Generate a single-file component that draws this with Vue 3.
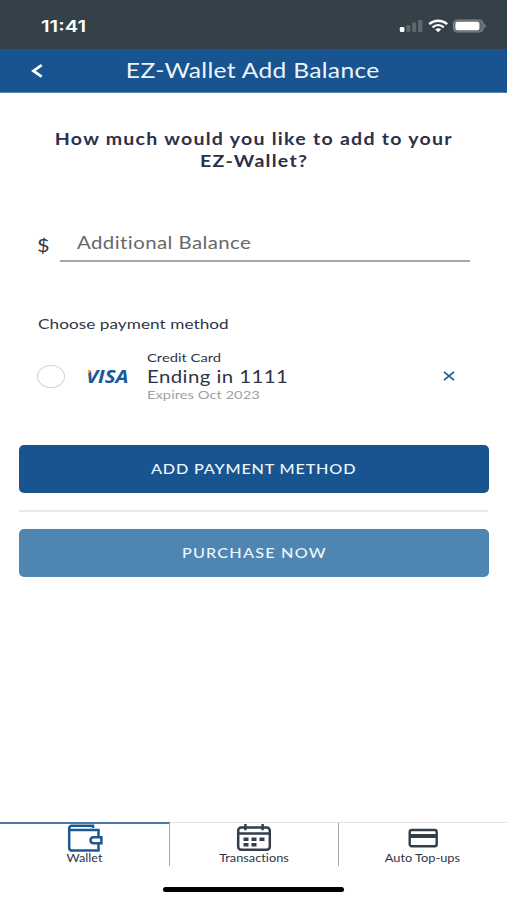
<script setup>
import { ref } from 'vue'

const selected = ref(false)
const activeTab = ref('wallet')
const tabs = [
  { id: 'wallet', label: 'Wallet' },
  { id: 'transactions', label: 'Transactions' },
  { id: 'topups', label: 'Auto Top-ups' },
]
</script>

<template>
  <div class="screen">
    <div class="status">
      <span class="time">11:41</span>
      <svg class="status-icons" width="88" height="16" viewBox="0 0 88 16">
        <rect x="0.8" y="8" width="4.6" height="5" rx="1.2" fill="#fff" />
        <g fill="#5d696f">
          <rect x="7.4" y="6" width="4" height="7" rx="1" />
          <rect x="13.2" y="3.5" width="4" height="9.5" rx="1" />
          <rect x="19" y="1" width="4.4" height="12" rx="1" />
        </g>
        <g fill="none" stroke="#fff" stroke-width="2.3">
          <path d="M30.2 5.1C35.5 .6 42.9 .6 48.2 5.1" />
          <path d="M33.6 8.3C36.9 5.3 41.5 5.3 44.8 8.3" />
        </g>
        <path d="M36.2 10.3Q39.2 8 42.2 10.3L39.2 13.2Z" fill="#fff" />
        <rect x="54.5" y="1" width="29.5" height="12" rx="3.7" fill="#5f6a70" stroke="#7d878c" stroke-width="1.2" />
        <rect x="56.4" y="2.7" width="24" height="8.6" rx="2" fill="#fff" />
        <path d="M85.3 4.500Q88 7 85.3 9.500Z" fill="#8b9498" />
      </svg>
    </div>

    <header class="header">
      <svg class="back" width="14" height="16" viewBox="0 0 14 16">
        <path d="M11.7 2.2L3.4 7.9L11.7 13.6" fill="none" stroke="#fff" stroke-width="2.7" />
      </svg>
      <h1><span class="tx title">EZ-Wallet Add Balance</span></h1>
    </header>

    <main class="content">
      <h2 class="question">
        <span class="tx q1">How much would you like to add to your</span>
        <span class="tx q2">EZ-Wallet?</span>
      </h2>

      <div class="amount">
        <span class="dollar"><span class="tx">$</span></span>
        <label class="field">
          <span class="tx placeholder">Additional Balance</span>
        </label>
      </div>

      <h3 class="choose"><span class="tx choose-text">Choose payment method</span></h3>

      <div class="method" @click="selected = !selected">
        <span class="radio" :class="{ on: selected }"></span>
        <svg class="visa" width="50" height="26" viewBox="0 0 50 26">
          <defs>
            <linearGradient id="visaFill" gradientUnits="userSpaceOnUse" x1="3" y1="7" x2="9" y2="13">
              <stop offset=".48" stop-color="#efa32f" />
              <stop offset=".56" stop-color="#1c579c" />
            </linearGradient>
          </defs>
          <text x="3" y="19.500" textLength="42.500" lengthAdjust="spacingAndGlyphs" fill="url(#visaFill)">VISA</text>
        </svg>
        <div class="card">
          <span class="tx type">Credit Card</span>
          <span class="tx ending">Ending in 1111</span>
          <span class="tx expires">Expires Oct 2023</span>
        </div>
        <svg class="remove" width="12" height="10" viewBox="0 0 12 10">
          <path d="M1 .8L11 9.2M11 .8L1 9.2" stroke="#1b5a92" stroke-width="1.7" />
        </svg>
      </div>

      <button class="btn add"><span class="tx add-text">ADD PAYMENT METHOD</span></button>
      <div class="divider"></div>
      <button class="btn buy"><span class="tx buy-text">PURCHASE NOW</span></button>
    </main>

    <nav class="tabs">
      <div v-for="t in tabs" :key="t.id" class="tab" :class="{ active: activeTab === t.id }" @click="activeTab = t.id">
        <svg v-if="t.id === 'wallet'" width="36" height="30" viewBox="0 0 36 30" fill="none" stroke="#1c5893" stroke-width="2.5">
          <path d="M26 4V1.700H5Q2.200 1.700 2.200 4.200V23.700Q2.200 26.600 5.200 26.600H31.500V20M31.500 13V6H5Q2.200 6 2.200 4.200" />
          <path d="M34.400 13.200H26.500Q23.500 13.400 23.500 16.200Q23.500 19 26.500 19.200H34.400Z" />
        </svg>
        <svg v-else-if="t.id === 'transactions'" width="36" height="30" viewBox="0 0 36 30" fill="none" stroke="#333e4a" stroke-width="2.5">
          <rect x="2.2" y="3.500" width="31.6" height="22.300" rx="3" />
          <path d="M2 9.500H34M9.400 0V6.200M26.600 0V6.200" />
          <path d="M7.500 15.200H12.500M15.500 15.200H20.500M23.500 15.200H28.500M7.500 20.700H12.500M15.500 20.700H20.500" stroke-width="3.4" />
        </svg>
        <svg v-else width="36" height="30" viewBox="0 0 36 30" fill="none" stroke="#333e4a" stroke-width="2.4">
          <rect x="4.7" y="6" width="27" height="16.2" rx="2" />
          <path d="M4.5 12H32" stroke-width="4" />
        </svg>
        <span class="tx tab-label">{{ t.label }}</span>
      </div>
    </nav>
    <div class="home"><span></span></div>
  </div>
</template>

<style>
body { margin: 0; background: #fff; }
</style>

<style scoped>
* { box-sizing: border-box; }
.screen { width: 507px; height: 900px; display: flex; flex-direction: column; background: #fff; font-family: Lato, "Noto Sans", sans-serif; font-variant-ligatures: none; color: #2f3446; overflow: hidden; }
.tx { display: inline-block; white-space: nowrap; transform: scaleX(1.2); }
.status { height: 49px; flex: none; background: #354149; display: flex; justify-content: space-between; padding: 16px 20px 0 41px; }
.time { font: 600 16px/20px Inter, sans-serif; color: #fff; transform: scaleX(1.27); transform-origin: left; }
.status-icons { margin-top: 3px; }
.header { height: 44px; flex: none; background: #18548f; display: flex; align-items: center; padding-left: 30px; border-bottom: 1px solid #5584b1; }
.header h1 { margin: 0 45px 2px 0; flex: 1; text-align: center; font-size: 20.5px; line-height: 26px; font-weight: 400; letter-spacing: .26px; color: #edf5fc; }
.content { padding: 35px 19px 0; flex: 1; }
.question { margin: 0; display: flex; flex-direction: column; align-items: center; font-size: 16.3px; line-height: 22px; font-weight: 700; letter-spacing: 1.05px; color: #2d304b; }
.q2 { padding-left: 1px; }
.amount { margin: 54px 18px 0 19px; display: flex; height: 36px; }
.dollar { width: 22px; font-size: 18px; line-height: 38px; }
.field { flex: 1; border-bottom: 2px solid #a7a7a7; padding: 3px 0 0 17px; font-size: 17px; line-height: 27px; color: #686868; }
.choose { margin: 52px 0 0 19px; font-size: 14.3px; line-height: 20px; font-weight: 400; letter-spacing: .05px; }
.method { margin: 15px 0 0 18px; height: 54px; display: flex; align-items: center; }
.radio { width: 28px; height: 23px; border: 1.5px solid #d3d3d3; border-radius: 50%; }
.radio.on { background: #18548f; }
.visa { margin-left: 18px; overflow: visible; font: italic 700 17.5px "Open Sans", sans-serif; }
.card { margin-left: 14px; width: 295.5px; display: flex; flex-direction: column; align-items: flex-start; }
.type { font-size: 12.3px; line-height: 17px; }
.ending { margin: 1px 0 -1px; font-size: 17px; line-height: 20px; letter-spacing: .36px; }
.expires { font-size: 12.3px; line-height: 17px; color: #a1a1a1; }
.btn { display: block; width: 470px; height: 48px; padding: 0; border: 0; border-radius: 5px; font: 500 13.5px/18px Lato, sans-serif; letter-spacing: 1px; color: #edf6fd; }
.add { margin-top: 42px; background: #18548f; }
.add-text { letter-spacing: .68px; }
.buy { background: #4e86b1; }
.divider { height: 2px; margin: 17px 0 16.5px; background: #e8e8e8; }
.placeholder, .choose-text, .type, .ending, .expires { transform-origin: left; }
.placeholder { letter-spacing: .36px; }
.tabs { display: grid; grid-template-columns: 170px 169px 1fr; height: 44px; flex: none; }
.tab { display: flex; flex-direction: column; align-items: center; border-top: 1px solid #e4e4e4; border-right: 1px solid #a8a8a8; padding-top: 1px; }
.tab:last-child { border-right: 0; padding-right: 1px; }
.tab.active { border-top: 2px solid #4c78a9; padding-top: 0; }
.tab svg { flex: none; }
.tab-label { font-size: 11px; line-height: 13px; margin-top: -3px; transform: scaleX(1.16); }
.home { height: 34px; flex: none; display: flex; justify-content: center; padding-top: 21px; }
.home span { width: 181px; height: 5px; border-radius: 3px; background: #000; }
</style>
